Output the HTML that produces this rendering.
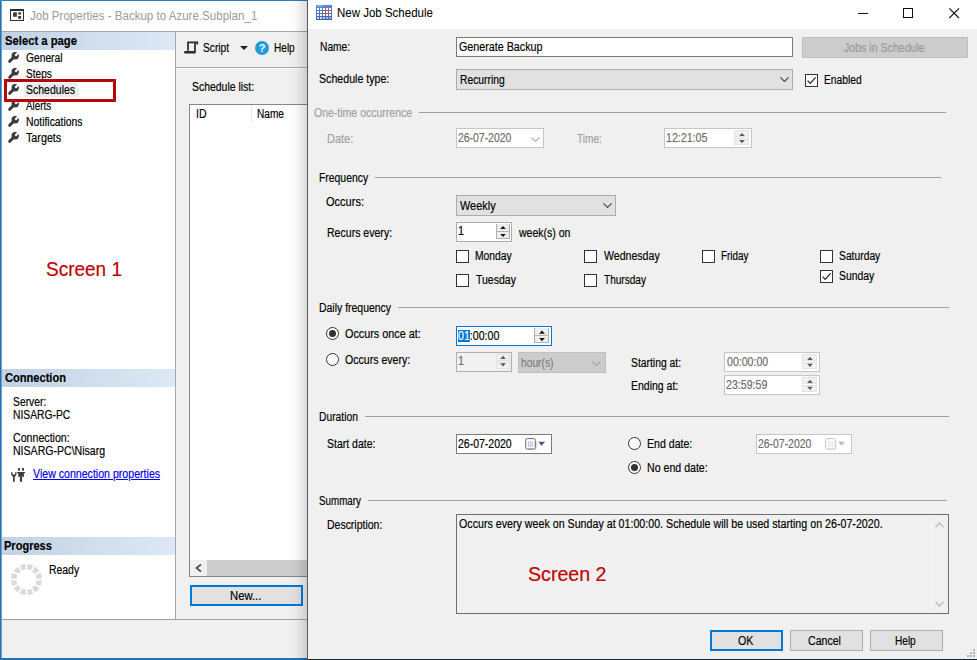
<!DOCTYPE html>
<html>
<head>
<meta charset="utf-8">
<title>New Job Schedule</title>
<style>
html,body{margin:0;padding:0;}
body{width:977px;height:660px;overflow:hidden;position:relative;background:#f0f0f0;font-family:"Liberation Sans",sans-serif;font-size:11px;color:#000;}
.a{position:absolute;white-space:nowrap;transform-origin:0 0;-webkit-text-stroke:0.18px;}
.b{position:absolute;box-sizing:border-box;}
svg{position:absolute;overflow:visible;}
</style>
</head>
<body>
<!-- left window: Job Properties -->
<div class="b" style="left:0px;top:0px;width:308px;height:660px;background:#f0f0f0;"></div>
<div class="b" style="left:2px;top:1px;width:306px;height:30px;background:#ffffff;"></div>
<div class="b" style="left:0px;top:0px;width:308px;height:1px;background:#2b7bbb;"></div>
<div class="b" style="left:0px;top:0px;width:1px;height:660px;background:#2372b3;"></div>
<div class="b" style="left:1px;top:0px;width:1px;height:660px;background:#6ea1cd;"></div>
<div class="b" style="left:0px;top:658px;width:308px;height:2px;background:#2173ad;"></div>
<svg style="left:10px;top:9px" width="14" height="12" viewBox="0 0 14 12"><rect x="0.5" y="0.5" width="13" height="11" fill="#fff" stroke="#2e2e2e"/><rect x="0" y="0" width="14" height="2" fill="#2e2e2e"/><rect x="3.1" y="3.3" width="3.8" height="4.5" fill="#3d3d3d"/><rect x="8.2" y="3.3" width="2.9" height="2.3" fill="#3d3d3d"/><rect x="8.2" y="7" width="2.9" height="2.8" fill="#3d3d3d"/></svg>
<div class="a" id="t_title" style="left:30.00px;top:8.44px;font-size:12.3px;line-height:16px;transform:scaleX(0.9394);color:#9c9a9a;-webkit-text-stroke:0;">Job Properties - Backup to Azure.Subplan_1</div>
<div class="b" style="left:2px;top:31px;width:173px;height:588px;background:#ffffff;"></div>
<div class="b" style="left:2px;top:31px;width:306px;height:1px;background:#a6a6a6;"></div>
<div class="b" style="left:175px;top:32px;width:1px;height:588px;background:#a6a6a6;"></div>
<div class="b" style="left:2px;top:32px;width:173px;height:17.5px;background:linear-gradient(90deg,#c2d2e4,#dce8f5);"></div>
<div class="a" id="t_sel" style="left:4.60px;top:33.17px;font-size:12.5px;line-height:16px;transform:scaleX(0.9014);font-weight:bold;">Select a page</div>
<svg style="left:8px;top:52px" width="11" height="11" viewBox="0 0 11 11"><path d="M1.7 9.3 L6 5" stroke="#3a3a3a" stroke-width="3" stroke-linecap="round" fill="none"/><circle cx="7.2" cy="3.8" r="3.7" fill="#3a3a3a"/><path d="M6.5 2.9 L10.7 -1.4 L12.4 0.3 L8.1 4.5 Z" fill="#fff"/></svg>
<div class="a" id="n_gen" style="left:25.70px;top:49.87px;font-size:12.5px;line-height:16px;transform:scaleX(0.8202);">General</div>
<svg style="left:8px;top:68px" width="11" height="11" viewBox="0 0 11 11"><path d="M1.7 9.3 L6 5" stroke="#3a3a3a" stroke-width="3" stroke-linecap="round" fill="none"/><circle cx="7.2" cy="3.8" r="3.7" fill="#3a3a3a"/><path d="M6.5 2.9 L10.7 -1.4 L12.4 0.3 L8.1 4.5 Z" fill="#fff"/></svg>
<div class="a" id="n_steps" style="left:26.20px;top:65.87px;font-size:12.5px;line-height:16px;transform:scaleX(0.8078);">Steps</div>
<div class="b" style="left:24px;top:83px;width:54px;height:14px;background:#ececec;"></div>
<svg style="left:8px;top:84px" width="11" height="11" viewBox="0 0 11 11"><path d="M1.7 9.3 L6 5" stroke="#3a3a3a" stroke-width="3" stroke-linecap="round" fill="none"/><circle cx="7.2" cy="3.8" r="3.7" fill="#3a3a3a"/><path d="M6.5 2.9 L10.7 -1.4 L12.4 0.3 L8.1 4.5 Z" fill="#fff"/></svg>
<div class="a" id="n_sch" style="left:26.20px;top:81.87px;font-size:12.5px;line-height:16px;transform:scaleX(0.8411);">Schedules</div>
<svg style="left:8px;top:100px" width="11" height="11" viewBox="0 0 11 11"><path d="M1.7 9.3 L6 5" stroke="#3a3a3a" stroke-width="3" stroke-linecap="round" fill="none"/><circle cx="7.2" cy="3.8" r="3.7" fill="#3a3a3a"/><path d="M6.5 2.9 L10.7 -1.4 L12.4 0.3 L8.1 4.5 Z" fill="#fff"/></svg>
<div class="a" id="n_al" style="left:26.20px;top:97.87px;font-size:12.5px;line-height:16px;transform:scaleX(0.7859);">Alerts</div>
<svg style="left:8px;top:116px" width="11" height="11" viewBox="0 0 11 11"><path d="M1.7 9.3 L6 5" stroke="#3a3a3a" stroke-width="3" stroke-linecap="round" fill="none"/><circle cx="7.2" cy="3.8" r="3.7" fill="#3a3a3a"/><path d="M6.5 2.9 L10.7 -1.4 L12.4 0.3 L8.1 4.5 Z" fill="#fff"/></svg>
<div class="a" id="n_not" style="left:26.00px;top:113.87px;font-size:12.5px;line-height:16px;transform:scaleX(0.8301);">Notifications</div>
<svg style="left:8px;top:132px" width="11" height="11" viewBox="0 0 11 11"><path d="M1.7 9.3 L6 5" stroke="#3a3a3a" stroke-width="3" stroke-linecap="round" fill="none"/><circle cx="7.2" cy="3.8" r="3.7" fill="#3a3a3a"/><path d="M6.5 2.9 L10.7 -1.4 L12.4 0.3 L8.1 4.5 Z" fill="#fff"/></svg>
<div class="a" id="n_tar" style="left:26.20px;top:129.87px;font-size:12.5px;line-height:16px;transform:scaleX(0.8585);">Targets</div>
<div class="b" style="left:4px;top:79px;width:112px;height:23px;border:3px solid #b3090c;"></div>
<div class="b" style="left:2px;top:369px;width:173px;height:18px;background:linear-gradient(90deg,#c2d2e4,#dce8f5);"></div>
<div class="a" id="t_conn" style="left:4.60px;top:370.37px;font-size:12.5px;line-height:16px;transform:scaleX(0.8873);font-weight:bold;">Connection</div>
<div class="a" id="t_srv" style="left:12.90px;top:394.17px;font-size:12.5px;line-height:16px;transform:scaleX(0.8260);">Server:</div>
<div class="a" id="t_srvv" style="left:13.30px;top:406.77px;font-size:12.5px;line-height:16px;transform:scaleX(0.8252);">NISARG-PC</div>
<div class="a" id="t_con2" style="left:12.60px;top:429.57px;font-size:12.5px;line-height:16px;transform:scaleX(0.8502);">Connection:</div>
<div class="a" id="t_conv" style="left:13.30px;top:442.77px;font-size:12.5px;line-height:16px;transform:scaleX(0.8445);">NISARG-PC\Nisarg</div>
<svg style="left:11px;top:468px" width="14" height="14" viewBox="0 0 14 14" fill="#3a3a3a"><path d="M0.1 4.6 L1.5 4.1 V6.6 H4.2 V4.1 L5.6 4.6 C5.9 6.6 5 8.2 3.7 8.7 V13.8 H2 V8.7 C0.7 8.2 -0.2 6.6 0.1 4.6 Z"/><rect x="7" y="0" width="1.9" height="2.7"/><rect x="11" y="0" width="1.9" height="2.7"/><rect x="6.1" y="4" width="7.9" height="1.1"/><rect x="7.2" y="5" width="5.7" height="3.8"/><rect x="8.9" y="8.7" width="2.1" height="5.1"/></svg>
<div class="a" id="t_link" style="left:33.30px;top:465.97px;font-size:12.5px;line-height:16px;transform:scaleX(0.8480);color:#0000ee;text-decoration:underline;">View connection properties</div>
<div class="b" style="left:2px;top:537px;width:173px;height:18px;background:linear-gradient(90deg,#c2d2e4,#dce8f5);"></div>
<div class="a" id="t_prog" style="left:4.30px;top:538.17px;font-size:12.5px;line-height:16px;transform:scaleX(0.8840);font-weight:bold;">Progress</div>
<svg style="left:10.8px;top:563.8px" width="31" height="31" viewBox="0 0 30.4 30.4" fill="#dadada"><path d="M30.4 16.3 A15.2 15.2 0 0 1 28.9 21.9 L24.0 19.5 A9.8 9.8 0 0 0 25.0 15.9 Z"/><path d="M27.8 23.7 A15.2 15.2 0 0 1 23.7 27.8 L20.7 23.3 A9.8 9.8 0 0 0 23.3 20.7 Z"/><path d="M21.9 28.9 A15.2 15.2 0 0 1 16.3 30.4 L15.9 25.0 A9.8 9.8 0 0 0 19.5 24.0 Z"/><path d="M14.1 30.4 A15.2 15.2 0 0 1 8.5 28.9 L10.9 24.0 A9.8 9.8 0 0 0 14.5 25.0 Z"/><path d="M6.7 27.8 A15.2 15.2 0 0 1 2.6 23.7 L7.1 20.7 A9.8 9.8 0 0 0 9.7 23.3 Z"/><path d="M1.5 21.9 A15.2 15.2 0 0 1 0.0 16.3 L5.4 15.9 A9.8 9.8 0 0 0 6.4 19.5 Z"/><path d="M0.0 14.1 A15.2 15.2 0 0 1 1.5 8.5 L6.4 10.9 A9.8 9.8 0 0 0 5.4 14.5 Z"/><path d="M2.6 6.7 A15.2 15.2 0 0 1 6.7 2.6 L9.7 7.1 A9.8 9.8 0 0 0 7.1 9.7 Z"/><path d="M8.5 1.5 A15.2 15.2 0 0 1 14.1 0.0 L14.5 5.4 A9.8 9.8 0 0 0 10.9 6.4 Z"/><path d="M16.3 0.0 A15.2 15.2 0 0 1 21.9 1.5 L19.5 6.4 A9.8 9.8 0 0 0 15.9 5.4 Z"/><path d="M23.7 2.6 A15.2 15.2 0 0 1 27.8 6.7 L23.3 9.7 A9.8 9.8 0 0 0 20.7 7.1 Z"/><path d="M28.9 8.5 A15.2 15.2 0 0 1 30.4 14.1 L25.0 14.5 A9.8 9.8 0 0 0 24.0 10.9 Z"/></svg>
<div class="a" id="t_ready" style="left:49.20px;top:561.87px;font-size:12.5px;line-height:16px;transform:scaleX(0.8332);">Ready</div>
<div class="b" style="left:176px;top:67px;width:132px;height:1px;background:#a6a6a6;"></div>
<div class="b" style="left:176px;top:68px;width:132px;height:1px;background:#fbfbfb;"></div>
<svg style="left:184px;top:41px" width="14" height="13" viewBox="0 0 14 13"><path d="M13.3 3.4 V1.4 H4 V9.8 M11 2 V11.5" fill="none" stroke="#2b2b2b" stroke-width="1.7"/><path d="M1.3 10 H11.4 V12.6 H1.3 A1.3 1.3 0 0 1 1.3 10 Z" fill="#2b2b2b"/></svg>
<div class="a" id="t_script" style="left:203.00px;top:40.17px;font-size:12.5px;line-height:16px;transform:scaleX(0.8141);">Script</div>
<svg style="left:239.5px;top:46px" width="8" height="4" viewBox="0 0 8 4"><path d="M0 0 H8 L4 4 Z" fill="#222"/></svg>
<svg style="left:255px;top:41px" width="14" height="14" viewBox="0 0 14 14"><circle cx="7" cy="7" r="7" fill="#1b9de2"/><text x="7" y="11" text-anchor="middle" font-family="Liberation Sans, sans-serif" font-weight="bold" font-size="11" fill="#fff">?</text></svg>
<div class="a" id="t_help1" style="left:274.30px;top:40.17px;font-size:12.5px;line-height:16px;transform:scaleX(0.8058);">Help</div>
<div class="a" id="t_slist" style="left:192.30px;top:78.77px;font-size:12.5px;line-height:16px;transform:scaleX(0.8350);">Schedule list:</div>
<div class="b" style="left:189px;top:104px;width:119px;height:473px;background:#ffffff;border:1px solid #828790;border-right:none;"></div>
<div class="a" id="t_id" style="left:196.00px;top:105.97px;font-size:12.5px;line-height:16px;transform:scaleX(0.8400);">ID</div>
<div class="a" id="t_nm" style="left:257.30px;top:105.97px;font-size:12.5px;line-height:16px;transform:scaleX(0.8060);">Name</div>
<div class="b" style="left:251px;top:105px;width:1px;height:18px;background:#e5e5e5;"></div>
<div class="b" style="left:190px;top:560px;width:118px;height:16px;background:#f0f0f0;"></div>
<div class="b" style="left:207px;top:560px;width:101px;height:16px;background:#cdcdcd;"></div>
<svg style="left:194.5px;top:563.5px" width="7" height="8" viewBox="0 0 7 8"><path d="M6 0.5 L1.5 4 L6 7.5" fill="none" stroke="#505050" stroke-width="1.8"/></svg>
<div class="b" style="left:190px;top:585px;width:113px;height:21px;background:#e1e1e1;border:2px solid #0078d7;"></div>
<div class="a" id="t_new" style="left:230.40px;top:587.87px;font-size:12.5px;line-height:16px;transform:scaleX(0.9008);">New...</div>
<div class="b" style="left:2px;top:619px;width:306px;height:1px;background:#a0a0a0;"></div>
<div class="b" style="left:290px;top:0px;width:17px;height:660px;background:linear-gradient(90deg,rgba(0,0,0,0),rgba(0,0,0,0.03) 40%,rgba(0,0,0,0.14));"></div>
<div class="b" style="left:307px;top:0px;width:1px;height:660px;background:#5a5a5a;"></div>
<!-- right window: New Job Schedule -->
<div class="b" style="left:308px;top:0px;width:669px;height:660px;background:#f0f0f0;"></div>
<div class="b" style="left:308px;top:0px;width:669px;height:29px;background:#ffffff;"></div>
<div class="b" style="left:308px;top:659px;width:669px;height:1px;background:#18283a;"></div>
<svg style="left:316px;top:5px" width="16" height="15" viewBox="0 0 16 15"><defs><linearGradient id="cg" x1="0" y1="0" x2="0" y2="1"><stop offset="0" stop-color="#5b8ade"/><stop offset="1" stop-color="#3c5fa8"/></linearGradient></defs><rect width="16" height="15" fill="url(#cg)"/><rect x="1" y="0.5" width="6" height="1" fill="#a9c2ee"/><g fill="#fff"><rect x="1" y="3" width="2" height="2"/><rect x="4" y="3" width="2" height="2"/><rect x="7" y="3" width="2" height="2"/><rect x="10" y="3" width="2" height="2"/><rect x="13" y="3" width="2" height="2"/><rect x="1" y="6" width="2" height="2"/><rect x="4" y="6" width="2" height="2"/><rect x="7" y="6" width="2" height="2"/><rect x="13" y="6" width="2" height="2"/><rect x="1" y="9" width="2" height="2"/><rect x="4" y="9" width="2" height="2"/><rect x="7" y="9" width="2" height="2"/><rect x="10" y="9" width="2" height="2"/><rect x="13" y="9" width="2" height="2"/><rect x="1" y="12" width="2" height="2" opacity=".8"/><rect x="4" y="12" width="2" height="2" opacity=".8"/><rect x="7" y="12" width="2" height="2" opacity=".6"/><rect x="10" y="12" width="2" height="2" opacity=".5"/><rect x="13" y="12" width="2" height="2" opacity=".5"/></g><rect x="9.5" y="5.5" width="3" height="3" fill="#fff" stroke="#e0431c"/></svg>
<div class="a" id="t_title2" style="left:336.70px;top:5.44px;font-size:12px;line-height:16px;transform:scaleX(0.9582);-webkit-text-stroke:0.05px;">New Job Schedule</div>
<svg style="left:858px;top:7px" width="102" height="12" viewBox="0 0 102 12"><path d="M0 6.5 H10" stroke="#111" stroke-width="1"/><rect x="45.5" y="1.5" width="9" height="9" fill="none" stroke="#111" stroke-width="1"/><path d="M91.3 1.3 L101 11 M101 1.3 L91.3 11" stroke="#111" stroke-width="1.1"/></svg>
<div class="a" id="r_name" style="left:319.50px;top:39.17px;font-size:12.5px;line-height:16px;transform:scaleX(0.8177);">Name:</div>
<div class="b" style="left:456px;top:37px;width:337px;height:20px;background:#fff;border:1px solid #7a7a7a;"></div>
<div class="a" id="r_namev" style="left:458.50px;top:39.27px;font-size:12.5px;line-height:16px;transform:scaleX(0.8581);">Generate Backup</div>
<div class="b" style="left:802px;top:37px;width:166px;height:21px;background:#cccccc;border:1px solid #bfbfbf;"></div>
<div class="a" id="r_jobs" style="left:843.80px;top:39.97px;font-size:12.5px;line-height:16px;transform:scaleX(0.8478);color:#9a9a9a;">Jobs in Schedule</div>
<div class="a" id="r_stype" style="left:319.00px;top:71.27px;font-size:12.5px;line-height:16px;transform:scaleX(0.8502);">Schedule type:</div>
<div class="b" style="left:456px;top:69px;width:337px;height:21px;background:#e1e1e1;border:1px solid #adadad;"></div>
<div class="a" id="r_rec" style="left:460.30px;top:71.97px;font-size:12.5px;line-height:16px;transform:scaleX(0.8249);">Recurring</div>
<svg style="left:779.6px;top:77.3px" width="9" height="5" viewBox="0 0 9 5"><path d="M0.4 0.4 L4.5 4.4 L8.6 0.4" fill="none" stroke="#444" stroke-width="1.1"/></svg>
<div class="b" style="left:805px;top:74px;width:13px;height:13px;background:#fff;border:1px solid #333;"></div>
<svg style="left:805px;top:74px" width="13" height="13" viewBox="0 0 13 13"><path d="M2.6 6.6 L5.2 9.4 L10.6 3.3" fill="none" stroke="#222" stroke-width="1.2"/></svg>
<div class="a" id="r_en" style="left:824.40px;top:72.27px;font-size:12.5px;line-height:16px;transform:scaleX(0.8218);">Enabled</div>
<div class="a" id="r_one" style="left:313.90px;top:105.27px;font-size:12.5px;line-height:16px;transform:scaleX(0.8407);color:#a0a0a0;">One-time occurrence</div>
<div class="b" style="left:419px;top:112px;width:527px;height:1px;background:#a0a0a0;"></div>
<div class="a" id="r_date" style="left:327.40px;top:130.77px;font-size:12.5px;line-height:16px;transform:scaleX(0.8787);color:#a0a0a0;">Date:</div>
<div class="b" style="left:456px;top:128px;width:88px;height:20px;background:#ffffff;border:1px solid #c6c6c6;"></div>
<div class="a" id="r_datev" style="left:457.90px;top:129.87px;font-size:12.5px;line-height:16px;transform:scaleX(0.8336);color:#6d6d6d;">26-07-2020</div>
<svg style="left:531px;top:136.7px" width="9" height="5" viewBox="0 0 9 5"><path d="M0.4 0.4 L4.5 4.4 L8.6 0.4" fill="none" stroke="#a9a9a9" stroke-width="1.1"/></svg>
<div class="a" id="r_time" style="left:576.80px;top:130.77px;font-size:12.5px;line-height:16px;transform:scaleX(0.8081);color:#a0a0a0;">Time:</div>
<div class="b" style="left:664px;top:128px;width:88px;height:20px;background:#ffffff;border:1px solid #c6c6c6;"></div>
<div class="a" id="r_timev" style="left:666.40px;top:130.17px;font-size:12.5px;line-height:16px;transform:scaleX(0.8503);color:#6d6d6d;">12:21:05</div>
<div class="b" style="left:734px;top:130px;width:15px;height:7.25px;background:#f0f0f0;box-shadow:inset 0 0 0 1px #e3e3e3;"></div>
<div class="b" style="left:734px;top:137.75px;width:15px;height:7.25px;background:#f0f0f0;box-shadow:inset 0 0 0 1px #e3e3e3;"></div>
<svg style="left:738.5px;top:130px" width="6" height="15" viewBox="0 0 6 15"><path d="M0.2 6.1 L3 2.9 L5.8 6.1 Z" fill="#5a5a5a"/><path d="M0.2 10 L3 13.2 L5.8 10 Z" fill="#5a5a5a"/></svg>
<div class="a" id="r_freq" style="left:319.30px;top:169.67px;font-size:12.5px;line-height:16px;transform:scaleX(0.8313);">Frequency</div>
<div class="b" style="left:375px;top:177px;width:566px;height:1px;background:#a0a0a0;"></div>
<div class="a" id="r_occ" style="left:326.40px;top:194.17px;font-size:12.5px;line-height:16px;transform:scaleX(0.8826);">Occurs:</div>
<div class="b" style="left:456px;top:195px;width:160px;height:21px;background:#e1e1e1;border:1px solid #adadad;"></div>
<div class="a" id="r_week" style="left:459.90px;top:198.37px;font-size:12.5px;line-height:16px;transform:scaleX(0.8736);">Weekly</div>
<svg style="left:602.6px;top:203.3px" width="9" height="5" viewBox="0 0 9 5"><path d="M0.4 0.4 L4.5 4.4 L8.6 0.4" fill="none" stroke="#444" stroke-width="1.1"/></svg>
<div class="a" id="r_recur" style="left:327.40px;top:224.97px;font-size:12.5px;line-height:16px;transform:scaleX(0.8441);">Recurs every:</div>
<div class="b" style="left:456px;top:222px;width:56px;height:20px;background:#fff;border:1px solid #adadad;"></div>
<div class="a" id="r_one1" style="left:457.70px;top:223.27px;font-size:12.5px;line-height:16px;transform:scaleX(0.8700);">1</div>
<div class="b" style="left:496px;top:224px;width:14px;height:15px;background:#ededed;border-left:1px solid #adadad;border-right:1px solid #adadad;border-bottom:1px solid #b4b4b4;"></div>
<div class="b" style="left:496px;top:230.5px;width:14px;height:1.6px;background:#b4b4b4;"></div>
<svg style="left:500px;top:224px" width="6" height="15" viewBox="0 0 6 15"><path d="M0.2 5.1 L3 1.9 L5.8 5.1 Z" fill="#111"/><path d="M0.2 9.9 L3 13.1 L5.8 9.9 Z" fill="#111"/></svg>
<div class="a" id="r_wk" style="left:519.05px;top:225.07px;font-size:12.5px;line-height:16px;transform:scaleX(0.8400);">week(s) on</div>
<div class="b" style="left:456px;top:250px;width:13px;height:13px;background:#fff;border:1px solid #333;"></div>
<div class="a" id="d_mon" style="left:475.20px;top:248.17px;font-size:12.5px;line-height:16px;transform:scaleX(0.8270);">Monday</div>
<div class="b" style="left:584px;top:250px;width:13px;height:13px;background:#fff;border:1px solid #333;"></div>
<div class="a" id="d_wed" style="left:603.50px;top:248.17px;font-size:12.5px;line-height:16px;transform:scaleX(0.8463);">Wednesday</div>
<div class="b" style="left:702px;top:250px;width:13px;height:13px;background:#fff;border:1px solid #333;"></div>
<div class="a" id="d_fri" style="left:721.20px;top:248.37px;font-size:12.5px;line-height:16px;transform:scaleX(0.7885);">Friday</div>
<div class="b" style="left:820px;top:250px;width:13px;height:13px;background:#fff;border:1px solid #333;"></div>
<div class="a" id="d_sat" style="left:839.00px;top:248.17px;font-size:12.5px;line-height:16px;transform:scaleX(0.8250);">Saturday</div>
<div class="b" style="left:456px;top:274px;width:13px;height:13px;background:#fff;border:1px solid #333;"></div>
<div class="a" id="d_tue" style="left:475.60px;top:271.77px;font-size:12.5px;line-height:16px;transform:scaleX(0.8400);">Tuesday</div>
<div class="b" style="left:584px;top:274px;width:13px;height:13px;background:#fff;border:1px solid #333;"></div>
<div class="a" id="d_thu" style="left:604.00px;top:271.77px;font-size:12.5px;line-height:16px;transform:scaleX(0.8058);">Thursday</div>
<div class="b" style="left:820px;top:270px;width:13px;height:13px;background:#fff;border:1px solid #333;"></div>
<svg style="left:820px;top:270px" width="13" height="13" viewBox="0 0 13 13"><path d="M2.6 6.6 L5.2 9.4 L10.6 3.3" fill="none" stroke="#222" stroke-width="1.2"/></svg>
<div class="a" id="d_sun" style="left:839.00px;top:268.37px;font-size:12.5px;line-height:16px;transform:scaleX(0.8307);">Sunday</div>
<div class="a" id="r_daily" style="left:319.30px;top:299.97px;font-size:12.5px;line-height:16px;transform:scaleX(0.8360);">Daily frequency</div>
<div class="b" style="left:398px;top:307px;width:551px;height:1px;background:#a0a0a0;"></div>
<div class="b" style="left:326px;top:327px;width:13px;height:13px;background:#fff;border:1px solid #333;border-radius:50%;"></div>
<div class="b" style="left:329px;top:330px;width:7px;height:7px;background:#333;border-radius:50%;"></div>
<div class="a" id="r_once" style="left:344.80px;top:326.17px;font-size:12.5px;line-height:16px;transform:scaleX(0.8657);">Occurs once at:</div>
<div class="b" style="left:456px;top:326px;width:96px;height:20px;background:#fff;border:1px solid #0078d7;"></div>
<div class="b" style="left:458px;top:329.5px;width:12px;height:12.5px;background:#0078d7;"></div>
<div class="a" id="r_oncev" style="left:458.30px;top:328.07px;font-size:12.5px;line-height:16px;transform:scaleX(0.8503);"><span style="color:#fff">01</span>:00:00</div>
<div class="b" style="left:534px;top:328px;width:15px;height:15px;background:#ededed;border-left:1px solid #adadad;border-right:1px solid #adadad;border-bottom:1px solid #b4b4b4;"></div>
<div class="b" style="left:534px;top:334.5px;width:15px;height:1.6px;background:#b4b4b4;"></div>
<svg style="left:538.5px;top:328px" width="6" height="15" viewBox="0 0 6 15"><path d="M0.2 5.7 L3 2.5 L5.8 5.7 Z" fill="#111"/><path d="M0.2 10 L3 13.2 L5.8 10 Z" fill="#111"/></svg>
<div class="b" style="left:326px;top:353px;width:13px;height:13px;background:#fff;border:1px solid #333;border-radius:50%;"></div>
<div class="a" id="r_every" style="left:344.80px;top:352.37px;font-size:12.5px;line-height:16px;transform:scaleX(0.8454);">Occurs every:</div>
<div class="b" style="left:456px;top:352px;width:56px;height:20px;background:#f0f0f0;border:1px solid #b0b0b0;"></div>
<div class="a" id="r_one2" style="left:457.70px;top:353.37px;font-size:12.5px;line-height:16px;transform:scaleX(0.8700);color:#6d6d6d;">1</div>
<div class="b" style="left:496px;top:354px;width:14px;height:7.25px;background:#f0f0f0;box-shadow:inset 0 0 0 1px #e3e3e3;"></div>
<div class="b" style="left:496px;top:361.75px;width:14px;height:7.25px;background:#f0f0f0;box-shadow:inset 0 0 0 1px #e3e3e3;"></div>
<svg style="left:500px;top:354px" width="6" height="15" viewBox="0 0 6 15"><path d="M0.2 5 L3 1.8 L5.8 5 Z" fill="#5a5a5a"/><path d="M0.2 9.3 L3 12.5 L5.8 9.3 Z" fill="#5a5a5a"/></svg>
<div class="b" style="left:518px;top:352px;width:88px;height:21px;background:#cccccc;border:1px solid #bfbfbf;"></div>
<div class="a" id="r_hours" style="left:521.30px;top:355.17px;font-size:12.5px;line-height:16px;transform:scaleX(0.8202);color:#7d7d7d;">hour(s)</div>
<svg style="left:592.3px;top:361px" width="9" height="5" viewBox="0 0 9 5"><path d="M0.4 0.4 L4.5 4.4 L8.6 0.4" fill="none" stroke="#a5a5a5" stroke-width="1.1"/></svg>
<div class="a" id="r_start" style="left:631.00px;top:355.17px;font-size:12.5px;line-height:16px;transform:scaleX(0.8273);">Starting at:</div>
<div class="b" style="left:724px;top:352px;width:96px;height:20px;background:#ffffff;border:1px solid #c6c6c6;"></div>
<div class="a" id="r_startv" style="left:726.50px;top:354.27px;font-size:12.5px;line-height:16px;transform:scaleX(0.8462);color:#6d6d6d;">00:00:00</div>
<div class="b" style="left:802px;top:354px;width:15px;height:7.25px;background:#f0f0f0;box-shadow:inset 0 0 0 1px #e3e3e3;"></div>
<div class="b" style="left:802px;top:361.75px;width:15px;height:7.25px;background:#f0f0f0;box-shadow:inset 0 0 0 1px #e3e3e3;"></div>
<svg style="left:806.5px;top:354px" width="6" height="15" viewBox="0 0 6 15"><path d="M0.2 6 L3 2.8 L5.8 6 Z" fill="#5a5a5a"/><path d="M0.2 9.8 L3 13 L5.8 9.8 Z" fill="#5a5a5a"/></svg>
<div class="a" id="r_end" style="left:631.00px;top:378.17px;font-size:12.5px;line-height:16px;transform:scaleX(0.8400);">Ending at:</div>
<div class="b" style="left:724px;top:375px;width:96px;height:20px;background:#ffffff;border:1px solid #c6c6c6;"></div>
<div class="a" id="r_endv" style="left:726.30px;top:377.37px;font-size:12.5px;line-height:16px;transform:scaleX(0.8483);color:#6d6d6d;">23:59:59</div>
<div class="b" style="left:802px;top:377px;width:15px;height:7.25px;background:#f0f0f0;box-shadow:inset 0 0 0 1px #e3e3e3;"></div>
<div class="b" style="left:802px;top:384.75px;width:15px;height:7.25px;background:#f0f0f0;box-shadow:inset 0 0 0 1px #e3e3e3;"></div>
<svg style="left:806.5px;top:377px" width="6" height="15" viewBox="0 0 6 15"><path d="M0.2 6 L3 2.8 L5.8 6 Z" fill="#5a5a5a"/><path d="M0.2 9.8 L3 13 L5.8 9.8 Z" fill="#5a5a5a"/></svg>
<div class="a" id="r_dur" style="left:319.30px;top:409.07px;font-size:12.5px;line-height:16px;transform:scaleX(0.8233);">Duration</div>
<div class="b" style="left:365px;top:416px;width:584px;height:1px;background:#a0a0a0;"></div>
<div class="a" id="r_sdate" style="left:327.10px;top:436.47px;font-size:12.5px;line-height:16px;transform:scaleX(0.8390);">Start date:</div>
<div class="b" style="left:456px;top:434px;width:96px;height:20px;background:#fff;border:1px solid #7a7a7a;"></div>
<div class="a" id="r_sdatev" style="left:458.00px;top:436.47px;font-size:12.5px;line-height:16px;transform:scaleX(0.8399);">26-07-2020</div>
<svg style="left:525px;top:438px;opacity:1" width="21" height="12" viewBox="0 0 21 12"><path d="M2.5 11.7 H9.6 Q11.1 11.7 11.1 10.2 V3" fill="none" stroke="#c4c4c4" stroke-width="0.9"/><rect x="0.7" y="0.6" width="9.6" height="10.4" rx="1.6" fill="#fff" stroke="#75655f"/><g fill="#a9b7d0"><rect x="2.9" y="3.5" width="1.4" height="1.4"/><rect x="2.9" y="5.5" width="1.4" height="1.4"/><rect x="2.9" y="7.5" width="1.4" height="1.4"/><rect x="4.9" y="3.5" width="1.4" height="1.4"/><rect x="4.9" y="5.5" width="1.4" height="1.4"/><rect x="4.9" y="7.5" width="1.4" height="1.4"/><rect x="6.9" y="3.5" width="1.4" height="1.4"/><rect x="6.9" y="5.5" width="1.4" height="1.4"/><rect x="6.9" y="7.5" width="1.4" height="1.4"/></g><path d="M13.2 3.7 H20 L16.6 7.8 Z" fill="#3e5c86"/></svg>
<div class="b" style="left:628px;top:437px;width:13px;height:13px;background:#fff;border:1px solid #333;border-radius:50%;"></div>
<div class="a" id="r_edate" style="left:647.40px;top:435.97px;font-size:12.5px;line-height:16px;transform:scaleX(0.8467);">End date:</div>
<div class="b" style="left:756px;top:434px;width:96px;height:20px;background:#ffffff;border:1px solid #c6c6c6;"></div>
<div class="a" id="r_edatev" style="left:758.20px;top:436.47px;font-size:12.5px;line-height:16px;transform:scaleX(0.8336);color:#6d6d6d;">26-07-2020</div>
<svg style="left:824.5px;top:438px;opacity:0.4" width="21" height="12" viewBox="0 0 21 12"><path d="M2.5 11.7 H9.6 Q11.1 11.7 11.1 10.2 V3" fill="none" stroke="#c4c4c4" stroke-width="0.9"/><rect x="0.7" y="0.6" width="9.6" height="10.4" rx="1.6" fill="#fff" stroke="#75655f"/><g fill="#a9b7d0"><rect x="2.9" y="3.5" width="1.4" height="1.4"/><rect x="2.9" y="5.5" width="1.4" height="1.4"/><rect x="2.9" y="7.5" width="1.4" height="1.4"/><rect x="4.9" y="3.5" width="1.4" height="1.4"/><rect x="4.9" y="5.5" width="1.4" height="1.4"/><rect x="4.9" y="7.5" width="1.4" height="1.4"/><rect x="6.9" y="3.5" width="1.4" height="1.4"/><rect x="6.9" y="5.5" width="1.4" height="1.4"/><rect x="6.9" y="7.5" width="1.4" height="1.4"/></g><path d="M13.2 3.7 H20 L16.6 7.8 Z" fill="#3e5c86"/></svg>
<div class="b" style="left:628px;top:461px;width:13px;height:13px;background:#fff;border:1px solid #333;border-radius:50%;"></div>
<div class="b" style="left:631px;top:464px;width:7px;height:7px;background:#333;border-radius:50%;"></div>
<div class="a" id="r_noend" style="left:647.40px;top:459.87px;font-size:12.5px;line-height:16px;transform:scaleX(0.8482);">No end date:</div>
<div class="a" id="r_sum" style="left:319.20px;top:493.17px;font-size:12.5px;line-height:16px;transform:scaleX(0.7850);">Summary</div>
<div class="b" style="left:368px;top:500px;width:579px;height:1px;background:#a0a0a0;"></div>
<div class="a" id="r_desc" style="left:327.20px;top:517.07px;font-size:12.5px;line-height:16px;transform:scaleX(0.8379);">Description:</div>
<div class="b" style="left:456px;top:514px;width:493px;height:100px;background:#f0f0f0;border:1px solid #6f6f6f;"></div>
<div class="b" style="left:930.5px;top:515px;width:1px;height:98px;background:#f7f7f7;"></div>
<div class="a" id="r_descv" style="left:458.90px;top:515.97px;font-size:12.5px;line-height:16px;transform:scaleX(0.8538);">Occurs every week on Sunday at 01:00:00. Schedule will be used starting on 26-07-2020.</div>
<svg style="left:934.5px;top:522px" width="9" height="6" viewBox="0 0 9 6"><path d="M0.5 5.2 L4.5 1 L8.5 5.2" fill="none" stroke="#bdbdbd" stroke-width="1.3"/></svg>
<svg style="left:934.5px;top:600.5px" width="9" height="6" viewBox="0 0 9 6"><path d="M0.5 0.8 L4.5 5 L8.5 0.8" fill="none" stroke="#bdbdbd" stroke-width="1.3"/></svg>
<div class="b" style="left:710px;top:630px;width:73px;height:21px;background:#e1e1e1;border:2px solid #0078d7;"></div>
<div class="a" id="b_ok" style="left:737.50px;top:633.37px;font-size:12.5px;line-height:16px;transform:scaleX(0.8526);">OK</div>
<div class="b" style="left:790px;top:630px;width:73px;height:21px;background:#e1e1e1;border:1px solid #adadad;"></div>
<div class="a" id="b_cancel" style="left:808.30px;top:633.37px;font-size:12.5px;line-height:16px;transform:scaleX(0.8475);">Cancel</div>
<div class="b" style="left:870px;top:630px;width:73px;height:21px;background:#e1e1e1;border:1px solid #adadad;"></div>
<div class="a" id="b_help" style="left:895.30px;top:633.37px;font-size:12.5px;line-height:16px;transform:scaleX(0.8058);">Help</div>
<svg style="left:966px;top:648px" width="10" height="10" viewBox="0 0 10 10" fill="#b4b4b4"><rect x="7" y="1" width="2" height="2"/><rect x="4" y="4" width="2" height="2"/><rect x="7" y="4" width="2" height="2"/><rect x="1" y="7" width="2" height="2"/><rect x="4" y="7" width="2" height="2"/><rect x="7" y="7" width="2" height="2"/></svg>
<div class="a" id="s1" style="left:46.30px;top:254.80px;font-size:20.5px;line-height:27px;transform:scaleX(0.9263);color:#c00000;">Screen 1</div>
<div class="a" id="s2" style="left:528.30px;top:559.80px;font-size:20.5px;line-height:27px;transform:scaleX(0.9569);color:#c00000;">Screen 2</div>
</body>
</html>
